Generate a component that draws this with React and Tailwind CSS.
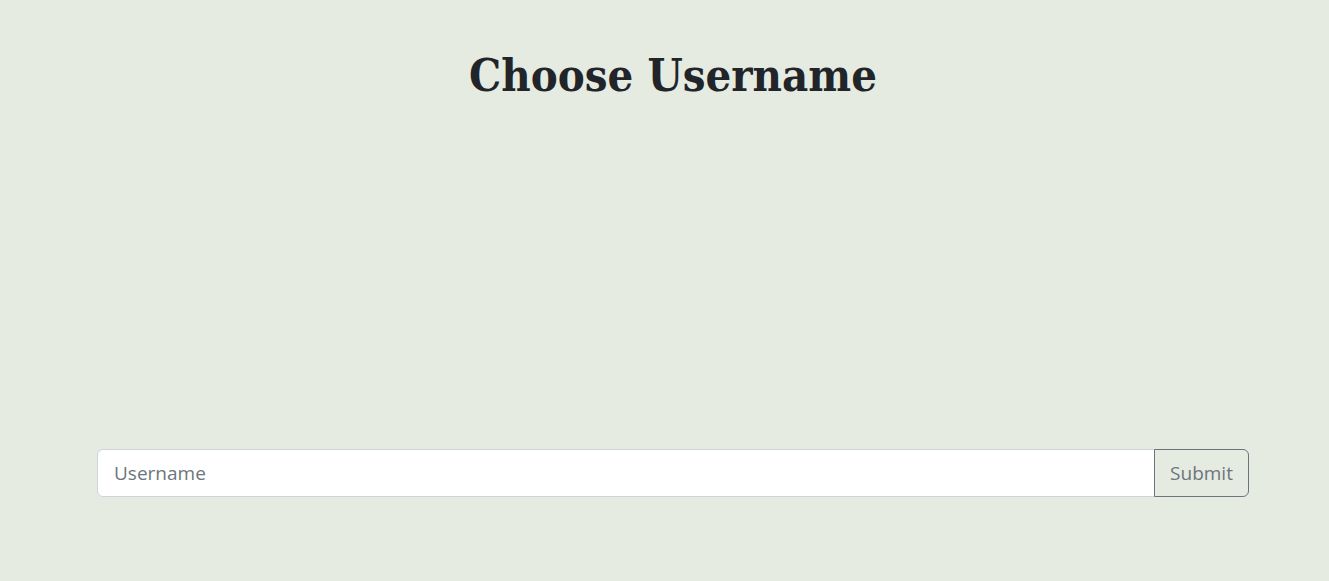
export default function App() {
  return (
    <div className="min-h-[581px] w-full bg-[#e5ebe1] font-['Open_Sans','Noto_Sans',sans-serif]">
      <div className="ml-[97px] w-[1152px] pt-[44px]">
        <h1 className="text-center font-['DejaVu_Serif_Condensed','DejaVu_Serif',serif] text-[45px] font-bold leading-[64px] text-[#212529]">
          Choose Username
        </h1>
        <form className="mt-[341px] flex" onSubmit={(e) => e.preventDefault()}>
          <input
            type="text"
            placeholder="Username"
            className="h-[48px] flex-1 rounded-l-[6px] border border-[#ced4da] bg-white px-4 text-[19px] text-[#212529] placeholder:text-[#6c757d] outline-none"
          />
          <button
            type="submit"
            className="-ml-px h-[48px] w-[95px] rounded-r-[6px] border border-[#6c757d] text-[19px] text-[#6c757d]"
          >
            Submit
          </button>
        </form>
      </div>
    </div>
  );
}
